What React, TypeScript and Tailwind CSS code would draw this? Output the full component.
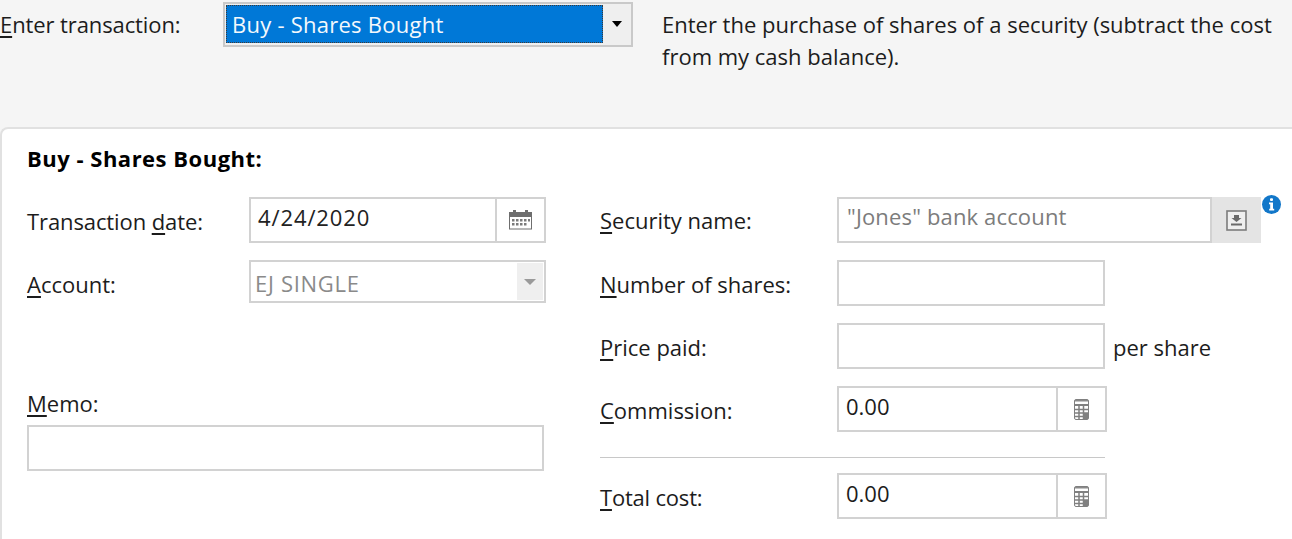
const Calc = () => (
  <svg width="15" height="21" viewBox="0 0 15 21" fill="none">
    <rect x="0.5" y="0.5" width="14" height="20" rx="1.5" fill="#fff" stroke="#808080" />
    <rect x="1" y="1" width="13" height="1.5" fill="#8a8a8a" />
    <rect x="1" y="5" width="13" height="2" fill="#808080" />
    <path d="M1 10.5h13M1 14h13M1 17.5h13M5 7v13M9.5 7v13" stroke="#808080" strokeWidth="1.5" />
    <rect x="10" y="14" width="4" height="6" fill="#808080" />
  </svg>
);

const CalendarIcon = () => (
  <svg width="23" height="20" viewBox="0 0 23 20" fill="none">
    <rect x="0.5" y="2.5" width="22" height="16.5" fill="#fff" stroke="#6e6e6e" />
    <rect x="0" y="2" width="23" height="5" fill="#6e6e6e" />
    <rect x="4" y="0" width="3" height="4" fill="#6e6e6e" />
    <rect x="16" y="0" width="3" height="4" fill="#6e6e6e" />
    <path d="M3 9h2.5v2.5H3zM7 9h2.5v2.5H7zM11 9h2.5v2.5H11zM15 9h2.5v2.5H15zM19 9h2v2.5h-2zM3 13h2.5v2.5H3zM7 13h2.5v2.5H7zM11 13h2.5v2.5H11zM15 13h2.5v2.5H15z" fill="#7a7a7a" />
  </svg>
);

const DownloadBox = () => (
  <svg width="21" height="21" viewBox="0 0 21 21" fill="none">
    <rect x="1" y="1" width="19" height="19" fill="#efefef" stroke="#7c7c7c" strokeWidth="1.6" />
    <path d="M8 5h5v3h2.5l-5 4-5-4H8z" fill="#6a6a6a" />
    <rect x="5" y="13.5" width="11" height="2" fill="#6a6a6a" />
  </svg>
);

const InfoIcon = () => (
  <svg width="19" height="19" viewBox="0 0 19 19">
    <circle cx="9.5" cy="9.5" r="9.5" fill="#1277c9" />
    <rect x="8" y="3.2" width="3" height="2.8" rx="1" fill="#fff" />
    <path d="M7 7.6h4v6.2h1.2v1.6H7.2v-1.6h1V9.2H7z" fill="#fff" />
  </svg>
);

function Label({ letter, rest, before = "", width }: { letter: string; rest: string; before?: string; width: string }) {
  return (
    <label className={`${width} shrink-0 pt-[3px] text-[#1c1c1c]`}>
      {before}
      <span className="underline underline-offset-[3px]">{letter}</span>
      {rest}
    </label>
  );
}

const field = "border-2 border-[#d2d2d2] bg-white";

export default function App() {
  return (
    <div className="h-[539px] w-[1292px] overflow-hidden bg-[#f5f5f5] font-['Open_Sans','Noto_Sans',sans-serif] text-[22px] leading-[32px] text-[#1c1c1c]">
      <div className="flex h-[127px] items-start pt-[8px]">
        <div className="w-[222px] shrink-0 tracking-[-0.1px] text-[#1c1c1c]">
          <span className="underline underline-offset-[3px]">E</span>nter transaction:
        </div>
        <div className="-mt-[6px] ml-[1px] flex h-[45px] w-[410px] shrink-0 border-2 border-[#c9c9c9] bg-[#efefef] p-[1px] pb-[2px]">
          <div className="flex-1 border border-dotted border-[#3a3a3a] bg-[#0078d7] pl-[5px] leading-[36px] tracking-[0.25px] text-[#f4f8fc]">Buy - Shares Bought</div>
          <div className="flex w-[27px] items-center justify-center">
            <span className="h-0 w-0 border-x-[5px] border-t-[6px] border-x-transparent border-t-black" />
          </div>
        </div>
        <p className="ml-[29px] w-[625px] leading-[32px]">
          Enter the purchase of shares of a security (subtract the cost from my cash balance).
        </p>
      </div>

      <div className="flex h-[412px] gap-[54px] rounded-tl-[8px] border-l-2 border-t-2 border-[#e1e1e1] bg-white pl-[25px]">
        <div className="w-[519px] shrink-0">
          <div className="pt-[13px] font-bold tracking-[0.5px] text-black">Buy - Shares Bought:</div>
          <div className="mt-[23px] flex">
            <Label before="Transaction " letter="d" rest="ate:" width="w-[222px] mt-[5px] tracking-[-0.1px]" />
            <div className="flex">
              <div className={`${field} h-[46px] w-[248px] pl-[7px] pt-[2px] tracking-[0.9px] text-[#222]`}>4/24/2020</div>
              <div className={`${field} flex h-[46px] w-[49px] items-center justify-center border-l-0`}>
                <CalendarIcon />
              </div>
            </div>
          </div>
          <div className="mt-[17px] flex">
            <Label letter="A" rest="ccount:" width="w-[222px] mt-[5px]" />
            <div className={`${field} flex h-[43px] w-[297px] p-[1px] pl-[4px] text-[#8a8a8a]`}>
              <span className="flex-1 pt-[4px] leading-[32px] tracking-[0.7px]">EJ SINGLE</span>
              <span className="flex w-[26px] items-center justify-center bg-[#efefef]">
                <span className="h-0 w-0 border-x-[6px] border-t-[6px] border-x-transparent border-t-[#9a9a9a]" />
              </span>
            </div>
          </div>
          <div className="mt-[84px]">
            <span className="underline underline-offset-[3px]">M</span>emo:
          </div>
          <div className={`${field} mt-[6px] h-[46px] w-[517px]`} />
        </div>

        <div className="relative flex-1 pt-[68px]">
          <div className="flex">
            <Label letter="S" rest="ecurity name:" width="w-[237px] mt-[4px]" />
            <div className={`${field} h-[46px] w-[375px] pl-[8px] pt-[1px] tracking-[0.15px] text-[#7c7c7c]`}>"Jones" bank account</div>
            <div className="flex h-[46px] w-[49px] items-center justify-center bg-[#e4e4e4]">
              <DownloadBox />
            </div>
          </div>
          <div className="absolute left-[662px] top-[66px]">
            <InfoIcon />
          </div>

          <div className="mt-[17px] flex">
            <Label letter="N" rest="umber of shares:" width="w-[237px] mt-[5px]" />
            <div className={`${field} h-[46px] w-[268px]`} />
          </div>
          <div className="mt-[17px] flex">
            <Label letter="P" rest="rice paid:" width="w-[237px] mt-[5px]" />
            <div className={`${field} h-[46px] w-[268px]`} />
            <span className="ml-[8px] mt-[8px]">per share</span>
          </div>
          <div className="mt-[17px] flex">
            <Label letter="C" rest="ommission:" width="w-[237px] mt-[5px]" />
            <div className={`${field} h-[46px] w-[221px] pl-[7px] pt-[2px]`}>0.00</div>
            <div className={`${field} flex h-[46px] w-[49px] items-center justify-center border-l-0`}>
              <Calc />
            </div>
          </div>
          <div className="mt-[25px] h-[1px] w-[505px] bg-[#c8c8c8]" />
          <div className="mt-[15px] flex">
            <Label letter="T" rest="otal cost:" width="w-[237px] mt-[5px] tracking-[-0.2px]" />
            <div className={`${field} h-[46px] w-[221px] pl-[7px] pt-[2px]`}>0.00</div>
            <div className={`${field} flex h-[46px] w-[49px] items-center justify-center border-l-0`}>
              <Calc />
            </div>
          </div>
        </div>
      </div>
    </div>
  );
}
